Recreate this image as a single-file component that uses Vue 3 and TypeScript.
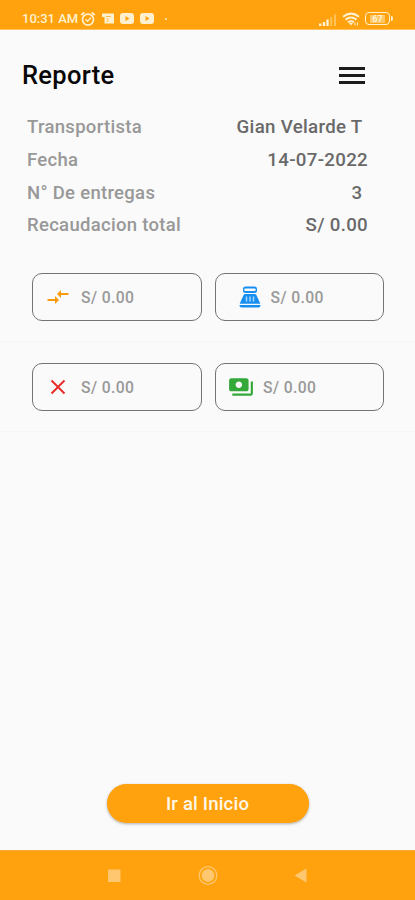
<script setup lang="ts">
interface SummaryRow {
  label: string
  value: string
  inset?: boolean
}

interface AmountCard {
  icon: 'transfer' | 'register' | 'cancel' | 'cash'
  amount: string
}

const summary: SummaryRow[] = [
  { label: 'Transportista', value: 'Gian Velarde T', inset: true },
  { label: 'Fecha', value: '14-07-2022' },
  { label: 'N° De entregas', value: '3', inset: true },
  { label: 'Recaudacion total', value: 'S/ 0.00' },
]

const cardRows: AmountCard[][] = [
  [
    { icon: 'transfer', amount: 'S/ 0.00' },
    { icon: 'register', amount: 'S/ 0.00' },
  ],
  [
    { icon: 'cancel', amount: 'S/ 0.00' },
    { icon: 'cash', amount: 'S/ 0.00' },
  ],
]
</script>

<template>
  <div class="screen">
    <header class="status">
      <span class="clock">10:31 AM</span>
      <svg class="alarm" viewBox="0 0 16 16" width="16" height="16" fill="none" stroke="currentColor">
        <circle cx="8" cy="8.6" r="5.5" stroke-width="1.7" />
        <path d="M1.2 4.2 4.3 1.5M14.8 4.2 11.7 1.5" stroke-width="1.7" />
        <path d="m5.5 8.3 2 2 3.4-3.5" stroke-width="1.3" />
      </svg>
      <svg class="news" viewBox="0 0 12 11" width="12" height="11">
        <path d="M0 .5h12v10H2.5V4H0z" fill="currentColor" />
        <path d="M4 3.5h5M4.5 6h2M4.5 8h2" stroke="#ffb94d" stroke-width="1" fill="none" />
      </svg>
      <svg class="video" viewBox="0 0 14 11" width="14" height="11">
        <rect width="14" height="11" rx="3" fill="currentColor" />
        <path d="m5.5 3 4 2.5-4 2.5z" fill="#ffa20d" />
      </svg>
      <svg class="video" viewBox="0 0 14 11" width="14" height="11">
        <rect width="14" height="11" rx="3" fill="currentColor" />
        <path d="m5.5 3 4 2.5-4 2.5z" fill="#ffa20d" />
      </svg>
      <i class="dot"></i>
      <svg class="signal" viewBox="0 0 18 12" width="18" height="12" fill="currentColor">
        <path d="M0 9.5h2.4V12H0zM3.8 8h2.4v4H3.8zM7.3 5.5h2.4V12H7.3z" />
        <path d="M11.2 3h2v9h-2zM15 .5h2V12h-2z" opacity=".4" />
      </svg>
      <svg class="wifi" viewBox="0 0 18 14" width="18" height="14" fill="none" stroke="currentColor" stroke-width="2">
        <path d="M1 4.7q8-6.2 16 0M3.5 7.6q5.5-4.2 11 0M6 10.3q3-2.2 6 0" />
        <path d="m7 11 2 2.4 2-2.4z" fill="currentColor" stroke="none" />
        <path d="M13 10.5v3M15.5 10.5v3" stroke-width="1" />
      </svg>
      <div class="battery"><span>67</span></div>
    </header>

    <main class="content">
      <div class="heading">
        <h1>Reporte</h1>
        <button class="menu" aria-label="Menu"><i></i><i></i><i></i></button>
      </div>

      <dl class="summary">
        <div v-for="row in summary" :key="row.label" class="summary-row">
          <dt>{{ row.label }}</dt>
          <dd :class="{ inset: row.inset }">{{ row.value }}</dd>
        </div>
      </dl>

      <section v-for="(cards, index) in cardRows" :key="index" class="card-row">
        <div v-for="card in cards" :key="card.icon" class="card" :class="card.icon">
          <svg v-if="card.icon === 'transfer'" class="icon" viewBox="0 0 24 24" fill="#f99b0c">
            <path d="M9 14H1.500v2H9v3l4-4-4-4zM15 13v-3h7.500V8H15V5l-4 4z" />
          </svg>
          <svg v-else-if="card.icon === 'register'" class="icon" viewBox="0 0 24 24" fill="#178ff0">
            <path fill-rule="evenodd" d="M16.5 1.500h-9a2.500 2.500 0 0 0-2.500 2.500v1.500a2.500 2.500 0 0 0 2.500 2.500h9a2.500 2.500 0 0 0 2.500-2.500V4a2.500 2.500 0 0 0-2.500-2.500zm0 4.500h-9a1 1 0 0 1 0-2.500h9a1 1 0 0 1 0 2.500z" />
            <path d="M20.500 22.500h-17a2 2 0 0 1-2-2V20h21v.5a2 2 0 0 1-2 2zM18.530 10.190A2 2 0 0 0 16.700 9H7.300a2 2 0 0 0-1.830 1.190L1.700 18.700h20.600z" />
            <path d="M8.500 11.500v5M12 11.500v5M15.500 11.500v5" fill="none" stroke="#a9d7fb" stroke-width="1.5" />
          </svg>
          <svg v-else-if="card.icon === 'cancel'" class="icon" viewBox="0 0 24 24" fill="#e62d2b">
            <path d="M19.200 6.200 17.800 4.800 12 10.590 6.200 4.800 4.800 6.200 10.590 12 4.800 17.800 6.200 19.200 12 13.410 17.800 19.200 19.200 17.800 13.410 12z" />
          </svg>
          <svg v-else class="icon" viewBox="0 0 24 24" fill="#35a83a">
            <path d="M19 14V6c0-1.100-.9-2-2-2H3c-1.100 0-2 .9-2 2v8c0 1.100.9 2 2 2h14c1.100 0 2-.9 2-2zm-9-1c-1.660 0-3-1.340-3-3s1.340-3 3-3 3 1.340 3 3-1.340 3-3 3zm13-6v11c0 1.100-.9 2-2 2H4v-2h17V7z" />
          </svg>
          <span class="amount">{{ card.amount }}</span>
        </div>
      </section>

      <button class="home">Ir al Inicio</button>
    </main>

    <nav class="navigation">
      <svg viewBox="0 0 20 20" width="20" height="20"><path d="M4 3.500h12.500v12.500H4z" fill="#ffc76f" /></svg>
      <svg viewBox="0 0 20 20" width="20" height="20">
        <circle cx="10" cy="9.500" r="8.800" fill="none" stroke="#ffc76f" stroke-width="1.300" />
        <circle cx="10" cy="9.500" r="6.400" fill="#ffc76f" />
      </svg>
      <svg viewBox="0 0 20 20" width="20" height="20"><path d="M15.500 2.500v14L3.500 9.500z" fill="#ffc76f" /></svg>
    </nav>
  </div>
</template>

<style>
body {
  margin: 0;
}
</style>

<style scoped>
.screen {
  box-sizing: border-box;
  width: 415px;
  height: 900px;
  display: flex;
  flex-direction: column;
  overflow: hidden;
  background: #fafafa;
  font-family: Roboto, "Liberation Sans", sans-serif;
}
.status {
  box-sizing: border-box;
  flex: none;
  height: 30px;
  padding: 8px 23px 0 22px;
  display: flex;
  align-items: center;
  background: #ffa20d;
  border-bottom: 1px solid #ffc161;
  color: #fff1cf;
}
.status svg {
  flex: none;
}
.clock {
  width: 58px;
  font-size: 13px;
  font-weight: 500;
  line-height: 20px;
  white-space: nowrap;
}
.news,
.video {
  margin-left: 6px;
}
.dot {
  width: 2px;
  height: 2px;
  margin-left: 11px;
  border-radius: 50%;
  background: currentColor;
}
.signal {
  margin-left: auto;
  margin-top: 2px;
}
.wifi {
  margin-left: 5px;
}
.battery {
  box-sizing: border-box;
  position: relative;
  width: 25px;
  height: 13px;
  margin: 0 2px 0 5px;
  border: 1.5px solid currentColor;
  border-radius: 4px;
  display: flex;
  align-items: center;
  justify-content: center;
  font-size: 9px;
  font-weight: 700;
  line-height: 8px;
}
.battery span {
  padding: 0 2px;
  background: #ffc765;
}
.battery::after {
  content: "";
  position: absolute;
  right: -4px;
  top: 3px;
  width: 2px;
  height: 5px;
  border-radius: 0 2px 2px 0;
  background: currentColor;
}
.content {
  flex: 1;
  min-height: 0;
  display: flex;
  flex-direction: column;
}
.heading {
  display: flex;
  align-items: center;
  justify-content: space-between;
  height: 46px;
  padding: 22px 50px 0 22px;
}
h1 {
  margin: 0;
  font-size: 25.5px;
  font-weight: 500;
  line-height: 46px;
  letter-spacing: 0.3px;
  color: #080808;
}
.menu {
  display: flex;
  flex-direction: column;
  gap: 4px;
  width: 26px;
  padding: 0;
  border: 0;
  background: none;
}
.menu i {
  height: 3px;
  background: #1c1c1c;
}
.summary {
  margin: 13px 47px 0 27px;
}
.summary-row {
  display: flex;
  align-items: center;
  justify-content: space-between;
  height: 32.7px;
  font-size: 18.5px;
  font-weight: 500;
  white-space: nowrap;
}
dt {
  color: #989898;
  letter-spacing: 0.3px;
}
dd {
  margin: 0;
  color: #696969;
  font-size: 18.7px;
  letter-spacing: 0.3px;
}
dd.inset {
  margin-right: 5.5px;
}
.card-row {
  box-sizing: border-box;
  flex: none;
  height: 90px;
  padding: 21px 31px 0 32px;
  display: grid;
  grid-template-columns: repeat(2, 1fr);
  gap: 13px;
  border-bottom: 1px solid #f5f5f5;
}
.summary + .card-row {
  margin-top: 10px;
}
.card {
  box-sizing: border-box;
  height: 48px;
  padding-left: 13px;
  display: flex;
  align-items: center;
  border: 1px solid #747474;
  border-radius: 10px;
}
.card.register {
  padding-left: 22px;
}
.card.register .amount {
  margin-left: 9px;
}
.icon {
  flex: none;
  width: 24px;
  height: 24px;
}
.card.cash .icon {
  width: 26px;
  height: 26px;
}
.card.cash {
  padding-left: 12px;
}
.amount {
  margin-left: 11px;
  padding-top: 1px;
  font-size: 15.7px;
  font-weight: 500;
  letter-spacing: 0.4px;
  color: #999;
}
.card.cash .amount {
  margin-left: 9.5px;
}
.home {
  align-self: center;
  width: 202px;
  height: 39px;
  margin-top: auto;
  margin-bottom: 27px;
  padding: 1px 0 0;
  border: 0;
  border-radius: 20px;
  background: #ffa20d;
  box-shadow: 0 1px 3px rgba(0, 0, 0, 0.3);
  color: #fff8e8;
  font: 500 18.5px/38px Roboto, "Liberation Sans", sans-serif;
  letter-spacing: 0.2px;
}
.navigation {
  box-sizing: border-box;
  flex: none;
  height: 50px;
  padding: 0 104px;
  display: flex;
  align-items: center;
  justify-content: space-between;
  background: #ffa20d;
  border-top: 1px solid #f4a934;
}
</style>
